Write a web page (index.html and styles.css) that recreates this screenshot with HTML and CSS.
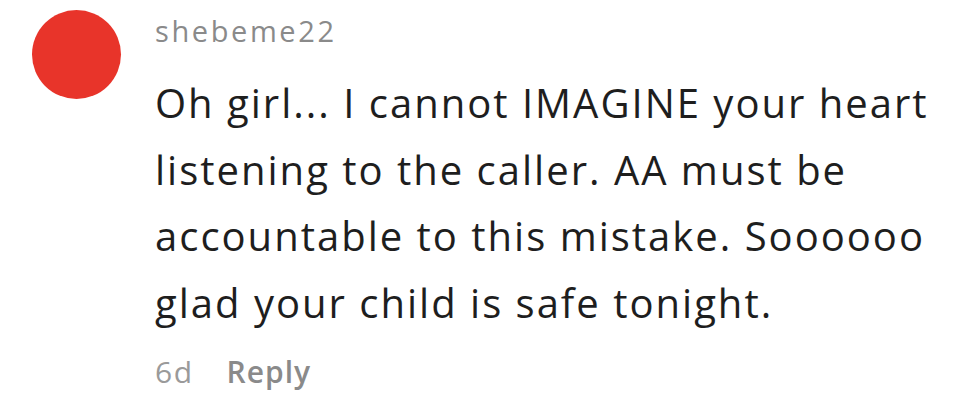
FILE: index.html
```html
<!DOCTYPE html>
<html>
<head>
<meta charset="utf-8">
<link rel="stylesheet" href="styles.css">
</head>
<body>
<div class="comment">
  <div class="avatar"></div>
  <div class="body">
    <div class="user">shebeme22</div>
    <p class="text">Oh girl... I cannot IMAGINE your heart<br>listening to the caller. AA must be<br>accountable to this mistake. Soooooo<br>glad your child is safe tonight.</p>
    <div class="meta"><span class="age">6d</span><span class="reply">Reply</span></div>
  </div>
</div>
</body>
</html>
```
FILE: styles.css
```css
html, body {
  margin: 0;
  padding: 0;
  background: #ffffff;
}
body {
  width: 980px;
  height: 402px;
  overflow: hidden;
  font-family: "Open Sans", "Noto Sans", sans-serif;
}
.comment {
  display: flex;
  align-items: flex-start;
  padding: 10px 0 0 32px;
  gap: 34px;
}
.avatar {
  width: 89px;
  height: 89px;
  border-radius: 50%;
  background: #e8342a;
  flex: none;
}
.body {
  display: flex;
  flex-direction: column;
}
.user {
  font-size: 29px;
  letter-spacing: 2.6px;
  color: #8a8a8a;
  line-height: 34px;
  margin-top: 4px;
}
.text {
  margin: 22px 0 0 0;
  font-size: 40px;
  letter-spacing: 2px;
  line-height: 66.5px;
  color: #1e1e1e;
}
.meta {
  margin-top: 16px;
  font-size: 30px;
  line-height: 40px;
  color: #9a9a9a;
  display: flex;
  gap: 33px;
}
.age {
  letter-spacing: 1.5px;
}
.reply {
  font-weight: 600;
  letter-spacing: 1px;
  color: #8a8a8a;
}
```
